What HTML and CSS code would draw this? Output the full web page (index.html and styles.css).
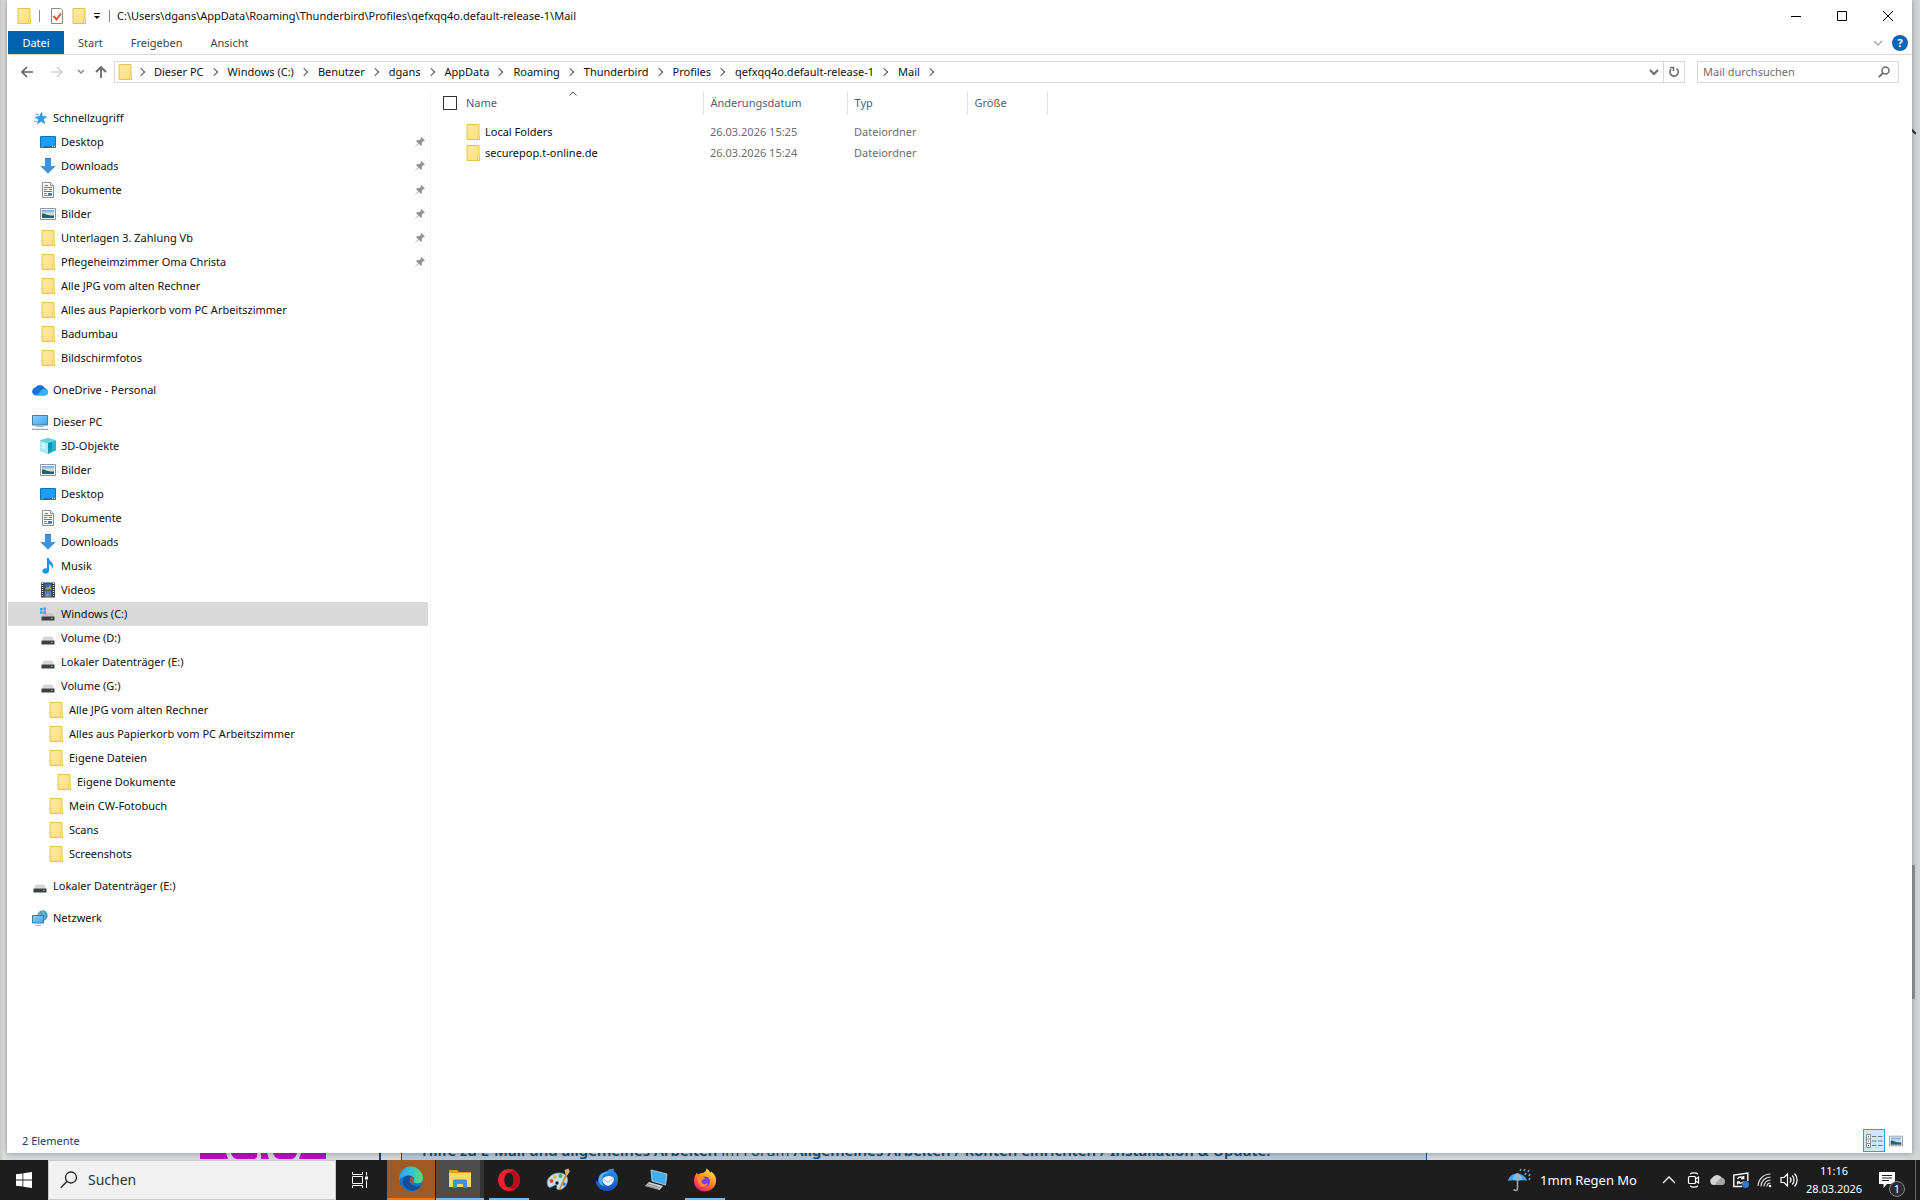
FILE: index.html
```html
<!DOCTYPE html>
<html lang="de">
<head>
  <meta charset="UTF-8">
  <meta name="viewport" content="width=device-width, initial-scale=1.0">
  <title>Mail</title>
  <link rel="stylesheet" href="styles.css">
</head>
<body>
  <!-- Icon sprite -->
  <svg class="sprite" aria-hidden="true">
    <defs>
      <linearGradient id="gFolder" x1="0" y1="0" x2="1" y2="1"><stop offset="0" stop-color="#ffeaa5"/><stop offset="1" stop-color="#fbdf7c"/></linearGradient>
      <linearGradient id="gSky" x1="0" y1="0" x2="0" y2="1"><stop offset="0" stop-color="#5aa5e8"/><stop offset=".5" stop-color="#d8ecf8"/><stop offset="1" stop-color="#3a6f8e"/></linearGradient>
      <linearGradient id="gScreen" x1="0" y1="0" x2="1" y2="1"><stop offset="0" stop-color="#8fd0fb"/><stop offset="1" stop-color="#3ba4ee"/></linearGradient>
      <linearGradient id="gEdge" x1="0" y1="0" x2="1" y2="0"><stop offset="0" stop-color="#2f9fe8"/><stop offset=".5" stop-color="#33c1d8"/><stop offset="1" stop-color="#62e06a"/></linearGradient>
      <linearGradient id="gFox" x1=".8" y1="0" x2=".2" y2="1"><stop offset="0" stop-color="#fff04a"/><stop offset=".4" stop-color="#ff9a1f"/><stop offset=".8" stop-color="#ff3a55"/><stop offset="1" stop-color="#e31587"/></linearGradient>
      <linearGradient id="gBird" x1="0" y1="0" x2="0" y2="1"><stop offset="0" stop-color="#2a8ff0"/><stop offset="1" stop-color="#1250c0"/></linearGradient>
    </defs>
    <symbol id="folder" viewBox="0 0 16 16"><path d="M2 .5h12v11l.5.5v3.5H2z" fill="url(#gFolder)" stroke="#e6c24e"/><path d="M12.500 15.500v-4l1-1.500 1 1.500v4z" fill="#fff0b5" stroke="#e6c24e" stroke-width=".8"/></symbol>
    <symbol id="star" viewBox="0 0 16 16"><path d="M9.500 2.500l1 4 4 .2-3.200 2.600 1.500 4.300-3.800-2.300-3.500 2.500 1.100-4.200L3.500 7l4-.4z" fill="#2f9fe6" stroke="#1b80cc" stroke-width=".6"/><path d="M4 4.500h3M2.500 8h3M2 11.500h3" stroke="#5ab8ee"/></symbol>
    <symbol id="desktop" viewBox="0 0 16 16"><path d="M.5 2.500h15v11H.5z" fill="#1a9dfb" stroke="#0e72b8"/><path d="M1 12.500h14" stroke="#0f6fc0"/><path d="M2 12.500h1m9 0h1m1 0h1" stroke="#fff"/></symbol>
    <symbol id="download" viewBox="0 0 16 16"><path d="M5 0h6v8h4.700L8 15.700.3 8H5z" fill="#3d94dc"/><path d="M5 .5h6" stroke="#2c78bb"/></symbol>
    <symbol id="document" viewBox="0 0 16 16"><path d="M2.500.5h8l3 3v12h-11z" fill="#fff" stroke="#8b9094"/><path d="M10.500.5v3h3" fill="#eee" stroke="#8b9094"/><path d="M4 5.500h5M5 3.500h3M4 7.500h3m2 0h3M9 5.500h3M4 9.500h8" stroke="#2a8fcb" fill="none"/><path d="M4 11.500h3m-3 2h8" stroke="#888"/><path d="M8 11h4v2H8z" fill="#3f7f9f"/></symbol>
    <symbol id="picture" viewBox="0 0 16 16"><path d="M.5 2.500h15v11H.5z" fill="#fff" stroke="#8e9499"/><path d="M2 4h12v8H2z" fill="url(#gSky)"/><path d="M2 7.500c3-.5 5 2.500 12 2.300V12H2z" fill="#2b5a6d"/></symbol>
    <symbol id="cloud" viewBox="0 0 16 16"><path d="M4 13.500a4 4 0 0 1-.4-7.900A5.200 5.200 0 0 1 12.500 6a3.800 3.800 0 0 1 .2 7.500z" fill="#1a86ea"/><path d="M3.600 5.600a5.200 5.200 0 0 1 8.900.4L5 12 1 11.500a4 4 0 0 1 2.600-5.900z" fill="#1a70dc"/><path d="M5 13.500l5-6a4 4 0 0 1 6 3 3 3 0 0 1-3 3z" fill="#31b5f7"/></symbol>
    <symbol id="pc" viewBox="0 0 16 16"><path d="M.5 1.500h15v9.500H.5z" fill="url(#gScreen)" stroke="#3f7fa8"/><path d="M4 12.500h8M6 11.500h4" stroke="#9bb"/><path d="M0 15.300h16" stroke="#93a5b5" stroke-width="1.200"/></symbol>
    <symbol id="cube" viewBox="0 0 16 16"><path d="M8 0l8 2.500v10L8 16l-8-3.500v-10z" fill="#25b7cf"/><path d="M0 2.500L8 5v11l-8-3.500z" fill="#a9ecf1"/><path d="M8 0l8 2.500L8 5 0 2.500z" fill="#67d3df"/><path d="M2 5l3.500 1v5L2 10z" fill="#d5f7f8"/><path d="M8 5l4-1v7.500L8 16z" fill="#0e97b4"/></symbol>
    <symbol id="music" viewBox="0 0 16 16"><path d="M7 0h1.800c.3 3 4.200 4 4.200 7.500 0 1.500-.5 3-1.300 3.800.5-3-.7-4.300-2.700-5V13a3.300 2.800 0 1 1-2-2.600z" fill="#1b95e6"/></symbol>
    <symbol id="video" viewBox="0 0 16 16"><path d="M1 .5h14v15H1z" fill="#39393d"/><path d="M2.500 1v14M13.500 1v14" stroke="#e8e8e8" stroke-width="1.400" stroke-dasharray="1 1"/><path d="M4.500 1.500h7v6h-7z" fill="#2f68b5"/><path d="M4.500 8.500h7v6h-7z" fill="#4c7fd0"/><path d="M5 7.500l2-3 1 2 2-4 1.500 5z" fill="#c0a824"/><path d="M5 14.500l2-3 4 3z" fill="#c38a4f"/></symbol>
    <symbol id="drive" viewBox="0 0 16 16"><path d="M4 6.500h8l2.500 4h-13z" fill="#d5d5d5"/><path d="M1.500 10.500h13v4h-13z" fill="#3d4144"/><path d="M11 12.500h1.500" stroke="#6fe27a"/></symbol>
    <symbol id="windrive" viewBox="0 0 16 16"><path d="M5 7h7l2.500 3.500h-13z" fill="#c8c8c8"/><path d="M1.500 10.500h13v4h-13z" fill="#3d4144"/><path d="M11 12.500h1.500" stroke="#6fe27a"/><path d="M0 2h2.600v2.600H0zm3.400-.4H6v3H3.400zM0 5.300h2.600v2.400H0zm3.400 0H6v3H3.400z" fill="#1fb2e6"/></symbol>
    <symbol id="network" viewBox="0 0 16 16"><circle cx="10.500" cy="5.500" r="5.300" fill="#6fafcc"/><path d="M8 1.500c2 1 2 3 1 4m3-5c2 2 3 6 1 9" stroke="#2e7fa6" fill="none"/><path d="M.5 5.500h11v7.500H.5z" fill="url(#gScreen)" stroke="#2484bd"/><path d="M3 15.300h6" stroke="#8fb0c0"/></symbol>
    <symbol id="pin" viewBox="0 0 12 12"><path d="M7.500 1L11 4.500l-.8.5-.5-.2-1.900 2L8 9l-1 1-2.200-2.200L1.200 11l-.2-.2 3.200-3.600L2 5l1-1 2.200.2 2-1.900-.2-.5z" fill="#8d949b"/></symbol>
  </svg>

  <div class="desktop">
    <!-- Browser page lying behind the explorer window -->
    <div class="backdrop">
      <div class="back-scroll">
        <svg width="8" height="6" viewBox="0 0 8 6"><path d="M0 5l4-4 4 4" fill="none" stroke="#333" stroke-width="2"/></svg>
        <span class="back-thumb"></span>
      </div>
      <div class="back-strip">
        <svg class="back-logo" width="126" height="6" viewBox="0 0 126 6"><path d="M0 0h26l2 6H0zM31 0h26v4l-2 2H37c-3 0-5-3-6-6zM61 0h6l2 6h-8zM73 0h24c-1 4-3 6-6 6H80c-4 0-6-3-7-6zM101 0h25v6H99z" fill="#b80fc4"/></svg>
        <div class="back-frame">
          <p class="back-note"><b>Hilfe zu E-Mail und allgemeines Arbeiten</b> im Forum <b>Allgemeines Arbeiten / Konten einrichten / Installation &amp; Update.</b></p>
        </div>
      </div>
    </div>

    <main class="window">
      <header class="titlebar">
        <svg class="icon"><use href="#folder"/></svg>
        <span class="divider"></span>
        <div class="quick">
          <button aria-label="Eigenschaften"><svg class="icon" viewBox="0 0 16 16"><path d="M2.500.5h9l2 2v13h-11z" fill="#fff" stroke="#8b8b8b"/><path d="M4.500 8l3 3.500L12 5.500" fill="none" stroke="#e0532f" stroke-width="2"/></svg></button>
          <button aria-label="Neuer Ordner"><svg class="icon"><use href="#folder"/></svg></button>
          <button aria-label="Anpassen"><svg width="8" height="8" viewBox="0 0 8 8"><path d="M1 1.500h6" stroke="#111"/><path d="M1 4h6L4 7z" fill="#111"/></svg></button>
        </div>
        <span class="divider"></span>
        <h1>C:\Users\dgans\AppData\Roaming\Thunderbird\Profiles\qefxqq4o.default-release-1\Mail</h1>
        <div class="window-buttons">
          <button aria-label="Minimieren"><svg width="10" height="10"><path d="M0 5.500h10" stroke="#000"/></svg></button>
          <button aria-label="Maximieren"><svg width="10" height="10"><path d="M.5.5h9v9h-9z" fill="none" stroke="#000"/></svg></button>
          <button aria-label="Schließen"><svg width="10" height="10"><path d="M0 0l10 10M10 0L0 10" stroke="#000"/></svg></button>
        </div>
      </header>

      <nav class="ribbon">
        <button class="tab active">Datei</button>
        <button class="tab">Start</button>
        <button class="tab">Freigeben</button>
        <button class="tab">Ansicht</button>
        <span class="spacer"></span>
        <button aria-label="Menüband erweitern"><svg width="10" height="10" viewBox="0 0 10 10"><path d="M1 3l4 4 4-4" fill="none" stroke="#a5a5a5" stroke-width="1.500"/></svg></button>
        <button class="help" aria-label="Hilfe">?</button>
      </nav>

      <div class="navbar">
        <div class="nav-buttons">
          <button aria-label="Zurück"><svg width="14" height="14" viewBox="0 0 14 14"><path d="M13 7H2m5-5L2 7l5 5" fill="none" stroke="#5f5f5f" stroke-width="1.600"/></svg></button>
          <button aria-label="Vorwärts"><svg width="14" height="14" viewBox="0 0 14 14"><path d="M1 7h11M7 2l5 5-5 5" fill="none" stroke="#d2d2d2" stroke-width="1.600"/></svg></button>
          <button class="narrow" aria-label="Zuletzt"><svg width="8" height="8" viewBox="0 0 8 8"><path d="M1 2l3 3 3-3" fill="none" stroke="#8a8a8a" stroke-width="1.500"/></svg></button>
          <button class="up" aria-label="Nach oben"><svg width="14" height="14" viewBox="0 0 14 14"><path d="M7 13V2M2 7l5-5 5 5" fill="none" stroke="#6b6b6b" stroke-width="1.800"/></svg></button>
        </div>
        <div class="address">
          <svg class="icon"><use href="#folder"/></svg>
          <ol class="crumbs">
            <li></li>
            <li><a href="#">Dieser PC</a></li>
            <li><a href="#">Windows (C:)</a></li>
            <li><a href="#">Benutzer</a></li>
            <li><a href="#">dgans</a></li>
            <li><a href="#">AppData</a></li>
            <li><a href="#">Roaming</a></li>
            <li><a href="#">Thunderbird</a></li>
            <li><a href="#">Profiles</a></li>
            <li><a href="#">qefxqq4o.default-release-1</a></li>
            <li><a href="#">Mail</a></li>
          </ol>
          <button aria-label="Verlauf"><svg width="10" height="10" viewBox="0 0 10 10"><path d="M1 3l4 4 4-4" fill="none" stroke="#6d6d6d" stroke-width="2"/></svg></button>
          <button class="refresh" aria-label="Aktualisieren"><svg width="12" height="12" viewBox="0 0 12 12"><path d="M8.500 2.500a4.200 4.200 0 1 1-5.500.6M2 1.500h3.500V5" fill="none" stroke="#6d6d6d" stroke-width="1.600"/></svg></button>
        </div>
        <div class="search">
          <input type="search" placeholder="Mail durchsuchen" aria-label="Mail durchsuchen">
          <svg width="12" height="12" viewBox="0 0 12 12"><circle cx="7.500" cy="4.500" r="3.500" fill="none" stroke="#6d6d6d" stroke-width="1.500"/><path d="M5 7L.8 11.200" stroke="#6d6d6d" stroke-width="1.800"/></svg>
        </div>
      </div>

      <div class="content">
        <aside class="sidebar">
          <ul>
            <li><a href="#"><svg class="icon"><use href="#star"/></svg>Schnellzugriff</a></li>
            <li class="l1"><a href="#"><svg class="icon"><use href="#desktop"/></svg>Desktop<svg class="pin"><use href="#pin"/></svg></a></li>
            <li class="l1"><a href="#"><svg class="icon"><use href="#download"/></svg>Downloads<svg class="pin"><use href="#pin"/></svg></a></li>
            <li class="l1"><a href="#"><svg class="icon"><use href="#document"/></svg>Dokumente<svg class="pin"><use href="#pin"/></svg></a></li>
            <li class="l1"><a href="#"><svg class="icon"><use href="#picture"/></svg>Bilder<svg class="pin"><use href="#pin"/></svg></a></li>
            <li class="l1"><a href="#"><svg class="icon"><use href="#folder"/></svg>Unterlagen 3. Zahlung Vb<svg class="pin"><use href="#pin"/></svg></a></li>
            <li class="l1"><a href="#"><svg class="icon"><use href="#folder"/></svg>Pflegeheimzimmer Oma Christa<svg class="pin"><use href="#pin"/></svg></a></li>
            <li class="l1"><a href="#"><svg class="icon"><use href="#folder"/></svg>Alle JPG vom alten Rechner</a></li>
            <li class="l1"><a href="#"><svg class="icon"><use href="#folder"/></svg>Alles aus Papierkorb vom PC Arbeitszimmer</a></li>
            <li class="l1"><a href="#"><svg class="icon"><use href="#folder"/></svg>Badumbau</a></li>
            <li class="l1"><a href="#"><svg class="icon"><use href="#folder"/></svg>Bildschirmfotos</a></li>
          </ul>
          <ul>
            <li><a href="#"><svg class="icon"><use href="#cloud"/></svg>OneDrive - Personal</a></li>
          </ul>
          <ul>
            <li><a href="#"><svg class="icon"><use href="#pc"/></svg>Dieser PC</a></li>
            <li class="l1"><a href="#"><svg class="icon"><use href="#cube"/></svg>3D-Objekte</a></li>
            <li class="l1"><a href="#"><svg class="icon"><use href="#picture"/></svg>Bilder</a></li>
            <li class="l1"><a href="#"><svg class="icon"><use href="#desktop"/></svg>Desktop</a></li>
            <li class="l1"><a href="#"><svg class="icon"><use href="#document"/></svg>Dokumente</a></li>
            <li class="l1"><a href="#"><svg class="icon"><use href="#download"/></svg>Downloads</a></li>
            <li class="l1"><a href="#"><svg class="icon"><use href="#music"/></svg>Musik</a></li>
            <li class="l1"><a href="#"><svg class="icon"><use href="#video"/></svg>Videos</a></li>
            <li class="l1 selected"><a href="#"><svg class="icon"><use href="#windrive"/></svg>Windows (C:)</a></li>
            <li class="l1"><a href="#"><svg class="icon"><use href="#drive"/></svg>Volume (D:)</a></li>
            <li class="l1"><a href="#"><svg class="icon"><use href="#drive"/></svg>Lokaler Datenträger (E:)</a></li>
            <li class="l1"><a href="#"><svg class="icon"><use href="#drive"/></svg>Volume (G:)</a></li>
            <li class="l2"><a href="#"><svg class="icon"><use href="#folder"/></svg>Alle JPG vom alten Rechner</a></li>
            <li class="l2"><a href="#"><svg class="icon"><use href="#folder"/></svg>Alles aus Papierkorb vom PC Arbeitszimmer</a></li>
            <li class="l2"><a href="#"><svg class="icon"><use href="#folder"/></svg>Eigene Dateien</a></li>
            <li class="l3"><a href="#"><svg class="icon"><use href="#folder"/></svg>Eigene Dokumente</a></li>
            <li class="l2"><a href="#"><svg class="icon"><use href="#folder"/></svg>Mein CW-Fotobuch</a></li>
            <li class="l2"><a href="#"><svg class="icon"><use href="#folder"/></svg>Scans</a></li>
            <li class="l2"><a href="#"><svg class="icon"><use href="#folder"/></svg>Screenshots</a></li>
          </ul>
          <ul>
            <li><a href="#"><svg class="icon"><use href="#drive"/></svg>Lokaler Datenträger (E:)</a></li>
          </ul>
          <ul>
            <li><a href="#"><svg class="icon"><use href="#network"/></svg>Netzwerk</a></li>
          </ul>
        </aside>

        <section class="files">
          <table>
            <thead>
              <tr>
                <th class="col-name">
                  <svg class="sort" width="8" height="5" viewBox="0 0 8 5"><path d="M.5 4.500L4 1l3.500 3.500" fill="none" stroke="#555"/></svg>
                  <div class="cell"><input type="checkbox" aria-label="Alle auswählen">Name</div>
                </th>
                <th class="col-date">Änderungsdatum</th>
                <th class="col-type">Typ</th>
                <th class="col-size">Größe</th>
              </tr>
            </thead>
            <tbody>
              <tr>
                <td><div class="cell file"><svg class="icon"><use href="#folder"/></svg>Local Folders</div></td>
                <td>26.03.2026 15:25</td>
                <td>Dateiordner</td>
                <td></td>
              </tr>
              <tr>
                <td><div class="cell file"><svg class="icon"><use href="#folder"/></svg>securepop.t-online.de</div></td>
                <td>26.03.2026 15:24</td>
                <td>Dateiordner</td>
                <td></td>
              </tr>
            </tbody>
          </table>
        </section>
      </div>

      <footer class="statusbar">
        <span>2 Elemente</span>
        <div class="views">
          <button class="active" aria-label="Details"><svg width="18" height="14" viewBox="0 0 18 14"><path d="M1.500.5h4v13h-4zM1.500 5h4m-4 4.500h4" fill="#fff" stroke="#8c8c8c"/><path d="M3 2.800h1M3 7.200h1M3 11.500h1" stroke="#333"/><path d="M7 2.500h4.500m1.500 0h4.500M7 7h4.500M13 7h4.500M7 11.500h4.500m1.500 0h4.500" stroke="#777"/></svg></button>
          <button aria-label="Große Symbole"><svg width="14" height="14" viewBox="0 0 16 16"><use href="#picture"/></svg></button>
        </div>
      </footer>
    </main>
  </div>

  <div class="taskbar">
    <button class="start" aria-label="Start"><svg width="16" height="16" viewBox="0 0 16 16"><path d="M0 2.300L6.500 1.400v6.200H0zM7.300 1.300L16 0v7.600H7.300zM0 8.400h6.500v6.200L0 13.700zM7.300 8.400H16V16l-8.700-1.300z" fill="#fff"/></svg></button>
    <label class="task-search">
      <svg width="18" height="18" viewBox="0 0 18 18"><circle cx="11" cy="6.500" r="5.500" fill="none" stroke="#222" stroke-width="1.300"/><path d="M7 10.500L.7 16.800" stroke="#222" stroke-width="1.300"/></svg>
      <input type="text" placeholder="Suchen" aria-label="Suchen">
    </label>
    <button class="task-view" aria-label="Aktive Anwendungen"><svg width="16" height="16" viewBox="0 0 16 16"><path d="M.5 4.500h10v7H.5zM.5 0v2.500h10V0M.5 16v-2.500h10V16M14.500 0v3.500m0 5V16" fill="none" stroke="#fff"/><path d="M13 4.500h3v3h-3z" fill="#fff"/></svg></button>
    <div class="apps">
      <button class="app attention" aria-label="Edge"><svg width="26" height="26" viewBox="0 0 24 24"><circle cx="12" cy="12" r="11" fill="#1a73c8"/><path d="M1 12A11 11 0 0 1 23 11c0 3.500-2.500 5-5.200 5-2.800 0-4.300-1-3.300-2.300 1.500-2.300-.5-5-4-5C6 8.700 2 10.500 1 14z" fill="url(#gEdge)"/><path d="M10.500 8.700C5 9 2.500 14 6 19c2 3 6 4.500 9.500 3.500 3-1 5-3 6.300-4.800-3.800 2-8.300 1.300-10.300-1.700-1.500-2.200-.8-4.500.8-5.700z" fill="#0d4f9f"/><path d="M12.300 10c2 .8 3 2.200 2.200 3.700-1 1.300.3 2.100 2.500 2.300-3 .8-6-.6-6-3 0-1.300.6-2.300 1.300-3z" fill="#a35a22"/></svg></button>
      <button class="app active" aria-label="Explorer"><svg width="24" height="24" viewBox="0 0 24 24"><path d="M1 3h8l2 2h12v4H1z" fill="#d9a02c"/><path d="M1 6h22v14H1z" fill="#fcd667"/><path d="M5 21v-7a1.500 1.500 0 0 1 1.500-1.500h11A1.500 1.500 0 0 1 19 14v7h-4v-4H9v4z" fill="#3c93d6"/></svg></button>
      <button class="app open" aria-label="Opera"><svg width="24" height="24" viewBox="0 0 24 24"><path fill-rule="evenodd" d="M12 1a11 11 0 1 1 0 22 11 11 0 0 1 0-22zm0 3.500c-2.700 0-4.700 3.300-4.700 7.500s2 7.500 4.700 7.500 4.700-3.300 4.700-7.500-2-7.500-4.700-7.500z" fill="#f0202f"/><path d="M12 4.500c2.700 0 4.700 3.300 4.700 7.500s-2 7.500-4.700 7.500c2 2.500 6 2 8 .1a11 11 0 0 0 0-15.200c-2-1.900-6-2.400-8 .1z" fill="#b70d1c"/></svg></button>
      <button class="app" aria-label="Paint"><svg width="24" height="24" viewBox="0 0 24 24"><path d="M2 18C-1 12 5 5 13 5c7 0 10 5 8 10-2 6-8 8-10 6-1-2 1-3-1-4s-6 5-8 1z" fill="#c5e0ee" stroke="#6d9fb8" stroke-width=".7"/><circle cx="5.500" cy="13" r="2" fill="#e8492e"/><circle cx="9" cy="9" r="1.800" fill="#e9b52c"/><circle cx="14.500" cy="8" r="2" fill="#4caf3a"/><circle cx="11" cy="15" r="1.700" fill="#1d1d1d"/><circle cx="18" cy="16" r="1.800" fill="#3f77d2"/><path d="M12.500 22L20 5l2 .8L14 22z" fill="#d38736"/><path d="M19.500 6l-1-4 4-1.500 1.300 3L21.500 7z" fill="#d8b384"/></svg></button>
      <button class="app" aria-label="Thunderbird"><svg width="24" height="24" viewBox="0 0 24 24"><path d="M12 3c2-2 5-2.500 7.500-2-1 1-1 1.500-.5 2.500 3.500 2 4.500 6 4 10-1 6-5.500 9.500-11 9.500S1 19 .8 12.500L3 14c0-3 .5-6 3-8z" fill="url(#gBird)"/><path d="M4 10c1-5 6-7 11-5.500-4 .5-7 2-8 5-1 3 0 6 2 8.500-4-.5-6-4-5-8z" fill="#53b4fa"/><path d="M7.500 10.500c3-3 8-3.500 11-1 1 3-.5 7-5.500 8.500-4-1-6-4-5.500-7.500z" fill="#eef6fd"/><path d="M8 10.500l5 4 5.500-5" fill="none" stroke="#8abdf0"/></svg></button>
      <button class="app" aria-label="Remotegerät"><svg width="24" height="24" viewBox="0 0 24 24"><path d="M7 2l16 4-1.500 11L8 13z" fill="#41aef2" stroke="#d0dbe2" stroke-width=".8"/><path d="M5 14l14 4-3.500 4L1 18z" fill="#cfd3d6"/><path d="M4 16l12 3.500M2.500 17.500l12 3.500" stroke="#666" stroke-width=".7"/></svg></button>
      <button class="app open" aria-label="Firefox"><svg width="24" height="24" viewBox="0 0 24 24"><path d="M3.500 5l2 1.500C6.500 5.500 8 5 9 5c1.500 0 4-1 4.500-4.500 2 1 3 3 4 4.500l.5-1.500C22 6 23.500 10 23 14c-1 6-6 9.500-11.500 9.500S1 19 1 13c0-3 1-5.500 2.500-8z" fill="url(#gFox)"/><circle cx="12" cy="13.500" r="5" fill="#7a3fe0"/><path d="M5 9c3-1 5 0 7 1-1 1.500-3.500 1.500-3.500 3.500 0 3 4 3.500 6 1.500 0 3-3 4.500-5.500 4C5.500 18 4 13 5 9z" fill="#ff8a2a"/></svg></button>
    </div>
    <div class="tray">
      <button class="weather"><svg width="24" height="24" viewBox="0 0 24 24"><path d="M0 13C1 8 5 5.500 9 5.500S18 8 19 13c-3-1-6-1-9.500 0C6 12 3 12 0 13z" fill="#4fa3e6"/><path d="M5 12c0-3 2-6 4.500-6.500C12 6 14 9 14 12c-3-.5-6-.5-9 0z" fill="#7cc3f5"/><path d="M9.500 5v16c0 2-3.500 2-3.500 0" fill="none" stroke="#a9a9a9" stroke-width="1.500"/><path d="M13 1l-1 2m5-2l-1 2m5-1l-1 2m-2 1l-1 2m5-1l-1 2m1 2l-1 2" stroke="#5db1ef" stroke-width="1.500"/></svg>1mm Regen Mo</button>
      <button aria-label="Ausgeblendete Symbole"><svg width="14" height="14" viewBox="0 0 14 14"><path d="M1 10l6-6 6 6" fill="none" stroke="#fff" stroke-width="1.300"/></svg></button>
      <button aria-label="Kamera"><svg width="16" height="16" viewBox="0 0 16 16"><rect x="3.500" y="4.500" width="7" height="7" rx="1" fill="none" stroke="#fff" stroke-width="1.200"/><path d="M10.500 7l3-2v6l-3-2M5 2c2-1.500 6-1.500 8 0M5 14c2 1.500 6 1.500 8 0" fill="none" stroke="#fff" stroke-width="1.200"/></svg></button>
      <button aria-label="OneDrive"><svg width="16" height="16" viewBox="0 0 16 16"><path d="M4 13a4 4 0 0 1-.4-7.500A5.200 5.200 0 0 1 12.500 5.600 3.800 3.800 0 0 1 12.700 13z" fill="#d4d4d4"/><path d="M5 13l7-7.500c3 .5 4 2.500 4 4A3.400 3.400 0 0 1 12.700 13z" fill="#a5a5a5"/></svg></button>
      <button aria-label="Update"><svg width="16" height="16" viewBox="0 0 16 16"><path d="M9 14.500H.8V3l14-2v8" fill="none" stroke="#fff" stroke-width="1.400"/><path d="M4.500 7a3.500 3 0 0 1 6-1m.2-2v2.500H8M10.500 9.500a3.500 3 0 0 1-6 .5m0 2.500V10H7" fill="none" stroke="#fff" stroke-width="1.300"/><circle cx="12.500" cy="12.500" r="3.500" fill="#2b7cd3"/></svg></button>
      <button aria-label="WLAN"><svg width="16" height="16" viewBox="0 0 16 16"><path d="M1 14A12.500 12.500 0 0 1 13.500 2M4 14.500A9.500 9.500 0 0 1 13.500 5M7 14.500A6.500 6.500 0 0 1 13.500 8M10 14.500a3.500 3.500 0 0 1 3.500-3.500" fill="none" stroke="#ddd" stroke-width="1.200"/><circle cx="13" cy="14" r="1.300" fill="#fff"/></svg></button>
      <button aria-label="Lautstärke"><svg width="18" height="16" viewBox="0 0 18 16"><path d="M1 5.500h3L7.500 2v12L4 10.500H1zM10 5.500c1.300 1.500 1.300 3.500 0 5M12.300 3.500c2.300 2.500 2.300 6.500 0 9M14.500 1.500c3.500 3.500 3.500 9.500 0 13" fill="none" stroke="#fff" stroke-width="1.200"/></svg></button>
      <button class="clock"><time>11:16</time><time>28.03.2026</time></button>
      <button class="notify" aria-label="Benachrichtigungen"><svg width="16" height="16" viewBox="0 0 16 16"><path d="M0 0h16v12H8l-3.500 4v-4H0z" fill="#fff"/><path d="M3 3.500h10M3 6h10M3 8.500h7" stroke="#1d1d1d"/></svg><span class="badge">1</span></button>
      <span class="show-desktop"></span>
    </div>
  </div>
</body>
</html>
```

FILE: styles.css
```css
* {
  box-sizing: border-box;
}

body {
  margin: 0;
  height: 100vh;
  display: flex;
  flex-direction: column;
  overflow: hidden;
  font-family: "Noto Sans", "Open Sans", sans-serif;
  font-size: 11px;
  line-height: 16px;
  color: #111;
  background: #d5d7d8;
}

button, input {
  font: inherit;
  color: inherit;
}

button {
  display: flex;
  align-items: center;
  justify-content: center;
  padding: 0;
  border: none;
  background: none;
}

a {
  color: inherit;
  text-decoration: none;
}

ul, ol {
  list-style: none;
  margin: 0;
  padding: 0;
}

svg {
  flex: none;
}

.sprite {
  position: absolute;
  width: 0;
  height: 0;
}

.icon {
  width: 16px;
  height: 16px;
}

/* desktop: the backdrop and the window share one grid cell */
.desktop {
  flex: 1;
  min-height: 0;
  display: grid;
  grid-template: minmax(0, 1fr) / minmax(0, 1fr);
}

.backdrop, .window {
  grid-area: 1 / 1;
}

.backdrop {
  position: relative;
  display: flex;
  align-items: flex-end;
  overflow: hidden;
  background: linear-gradient(90deg, #c8c8c8, #e0e0e0 4px, #d5d8da 7px, #d5d8da 99%, #d2d4d5);
}

.back-scroll {
  position: absolute;
  top: 123px;
  right: 4px;
  bottom: 0;
  width: 8px;
}

.back-thumb {
  display: block;
  width: 7px;
  height: 134px;
  margin-top: 726px;
  background: #979797;
}

.back-strip {
  flex: 1;
  height: 7px;
  padding-left: 200px;
  display: flex;
  align-items: flex-end;
}

.back-logo {
  align-self: flex-start;
  margin-right: 53px;
}

.back-frame {
  padding-left: 20px;
  border-left: 2px solid #0b4a73;
}

.back-note {
  margin: 0;
  padding: 0 156px 0 20px;
  border: solid #0b4a73;
  border-width: 0 1px;
  background: #b7c6d6;
  color: #0b4a73;
  font-size: 15px;
  line-height: 20px;
  white-space: nowrap;
}

.back-note b {
  font-weight: 600;
}

.window {
  display: flex;
  flex-direction: column;
  margin: 0 8px 7px 7px;
  border-left: 1px solid #fff;
  background: #fff;
  box-shadow: 0 0 6px rgba(0, 0, 0, .35);
  z-index: 1;
}

/* title bar */
.titlebar {
  height: 31px;
  display: flex;
  align-items: center;
  gap: 7px;
  padding: 0 1px 0 8px;
}

.titlebar h1 {
  flex: 1;
  margin: 0;
  font-size: 11px;
  font-weight: 400;
}

.divider {
  width: 1px;
  height: 12px;
  background: #888;
}

.quick {
  display: flex;
  gap: 6px;
  padding: 0 1px 0 2px;
}

.window-buttons {
  display: flex;
}

.window-buttons button {
  width: 46px;
  height: 30px;
}

/* ribbon */
.ribbon {
  height: 24px;
  display: flex;
  align-items: center;
  padding-right: 4px;
  border-bottom: 1px solid #d9d9d9;
}

.tab {
  height: 23px;
  padding: 0 14px;
  color: #444;
}

.tab.active {
  min-width: 56px;
  background: #0063b1;
  color: #fff;
}

.spacer {
  flex: 1;
}

.help {
  width: 16px;
  height: 16px;
  margin-left: 9px;
  border-radius: 50%;
  background: #0a64b8;
  color: #fff;
  font-weight: 700;
}

/* navigation row */
.navbar {
  display: flex;
  padding: 6px 13px 8px 7px;
}

.nav-buttons {
  width: 99px;
  display: flex;
  gap: 6px;
}

.nav-buttons button {
  width: 24px;
}

.nav-buttons .narrow {
  width: 12px;
}

.nav-buttons .up {
  width: 16px;
}

.address {
  flex: 1;
  height: 22px;
  display: flex;
  align-items: center;
  padding-left: 2px;
  border: 1px solid #d9d9d9;
}

.crumbs {
  flex: 1;
  display: flex;
}

.crumbs li {
  display: flex;
  align-items: center;
}

.crumbs li::after {
  content: "";
  width: 5px;
  height: 5px;
  margin: 0 11px 0 7px;
  border-top: 1px solid #555;
  border-right: 1px solid #555;
  transform: rotate(45deg);
}

.crumbs li:first-child::after {
  margin: 0 10px 0 5px;
}

.refresh {
  width: 21px;
  height: 20px;
  margin-left: 4px;
  border-left: 1px solid #d9d9d9;
}

.search {
  width: 202px;
  height: 22px;
  display: flex;
  align-items: center;
  margin-left: 12px;
  padding: 0 8px 0 5px;
  border: 1px solid #d9d9d9;
}

.search input {
  flex: 1;
  min-width: 0;
  padding: 0;
  border: none;
  outline: none;
  background: none;
}

.search input::placeholder {
  color: #6d6d6d;
  opacity: 1;
}

/* sidebar */
.content {
  flex: 1;
  min-height: 0;
  display: flex;
}

.sidebar {
  width: 423px;
  padding: 15px 2px 0 0;
  border-right: 1px solid #f3f3f3;
}

.sidebar ul {
  margin-bottom: 8px;
}

.sidebar a {
  height: 24px;
  display: flex;
  align-items: center;
  gap: 5px;
  padding: 0 2px 0 24px;
}

.sidebar .l1 a {
  padding-left: 32px;
}

.sidebar .l2 a {
  padding-left: 40px;
}

.sidebar .l3 a {
  padding-left: 48px;
}

.selected {
  background: #d9d9d9;
}

.pin {
  width: 12px;
  height: 12px;
  margin-left: auto;
}

/* file list */
.files {
  flex: 1;
}

table {
  table-layout: fixed;
  width: 616px;
  border-collapse: collapse;
}

th {
  position: relative;
  height: 24px;
  padding: 0 0 0 7px;
  border-right: 1px solid #e2e2e2;
  color: #4c607a;
  font-weight: 400;
  text-align: left;
}

td {
  height: 21px;
  padding: 0 0 0 7px;
  color: #6d6d6d;
}

tbody::before {
  content: "";
  display: block;
  height: 6px;
}

.col-name {
  width: 272px;
}

.col-date {
  width: 144px;
}

.col-type {
  width: 120px;
}

.col-size {
  width: 80px;
}

.cell {
  display: flex;
  align-items: center;
  gap: 9px;
  padding-left: 5px;
}

.cell input {
  appearance: none;
  width: 14px;
  height: 14px;
  margin: 0;
  border: 1px solid #333;
  background: #fff;
}

.file {
  gap: 4px;
  padding-left: 27px;
  color: #111;
}

.sort {
  position: absolute;
  top: 0;
  left: 138px;
}

/* status bar */
.statusbar {
  height: 25px;
  display: flex;
  align-items: center;
  justify-content: space-between;
  padding: 0 5px 0 14px;
  color: #26406e;
}

.views {
  display: flex;
}

.views button {
  width: 22px;
  height: 23px;
}

.views .active {
  border: 1px solid #3c9dc8;
  background: #cbe8f6;
}

/* taskbar */
.taskbar {
  height: 40px;
  display: flex;
  background: #1d1d1d;
  color: #fff;
}

.start {
  width: 48px;
}

.task-search {
  width: 288px;
  display: flex;
  align-items: center;
  gap: 10px;
  padding-left: 11px;
  border: 1px solid #ccc;
  background: #f2f2f2;
}

.task-search input {
  flex: 1;
  min-width: 0;
  padding: 0;
  border: none;
  outline: none;
  background: none;
  font-size: 14px;
}

.task-search input::placeholder {
  color: #333;
  opacity: 1;
}

.task-view {
  width: 48px;
}

.apps {
  flex: 1;
  display: flex;
  gap: 1px;
  padding-left: 3px;
}

.app {
  position: relative;
  width: 48px;
}

.app.attention {
  background: #a35a22;
  border-bottom: 2px solid #f7750c;
}

.app.active {
  background: linear-gradient(90deg, #4d4d4d 44px, #333 44px);
  border-bottom: 2px solid #76b9ed;
}

.app.open::after {
  content: "";
  position: absolute;
  left: 4px;
  right: 4px;
  bottom: 0;
  height: 2px;
  background: #76b9ed;
}

.tray {
  display: flex;
}

.tray button {
  width: 24px;
}

.tray .weather {
  width: auto;
  gap: 8px;
  margin-right: 20px;
  font-size: 13px;
}

.tray .clock {
  width: 66px;
  flex-direction: column;
  gap: 2px;
}

.tray .notify {
  position: relative;
  width: 40px;
}

.badge {
  position: absolute;
  right: 2px;
  bottom: 3px;
  width: 16px;
  height: 16px;
  border: 1px solid #888;
  border-radius: 50%;
  background: #2d2d2d;
  font-size: 11px;
  line-height: 14px;
  text-align: center;
}

.show-desktop {
  width: 5px;
  margin-left: 8px;
  border-left: 1px solid #666;
}
```
